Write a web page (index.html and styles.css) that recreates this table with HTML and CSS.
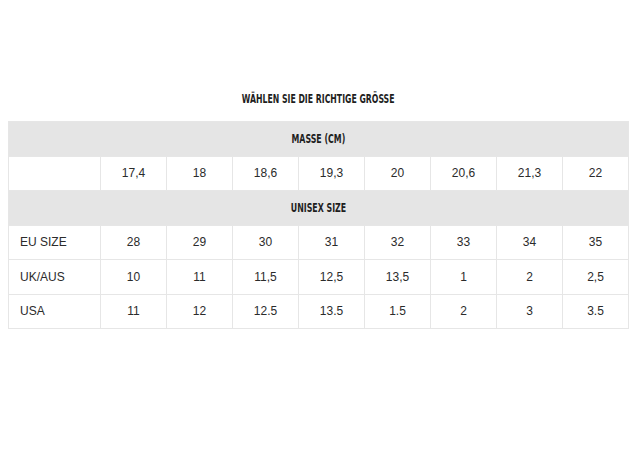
FILE: index.html
```html
<!DOCTYPE html>
<html lang="de">
<head>
<meta charset="utf-8">
<link rel="stylesheet" href="styles.css">
</head>
<body>
<div class="page">
  <h1 class="title"><span class="narrow">WÄHLEN SIE DIE RICHTIGE GRÖSSE</span></h1>
  <table class="sizes">
    <colgroup>
      <col class="c-first">
      <col><col><col><col><col><col><col><col>
    </colgroup>
    <tr class="head"><td colspan="9"><span class="narrow">MASSE (CM)</span></td></tr>
    <tr><td></td><td>17,4</td><td>18</td><td>18,6</td><td>19,3</td><td>20</td><td>20,6</td><td>21,3</td><td>22</td></tr>
    <tr class="head"><td colspan="9"><span class="narrow">UNISEX SIZE</span></td></tr>
    <tr><td class="label">EU SIZE</td><td>28</td><td>29</td><td>30</td><td>31</td><td>32</td><td>33</td><td>34</td><td>35</td></tr>
    <tr><td class="label">UK/AUS</td><td>10</td><td>11</td><td>11,5</td><td>12,5</td><td>13,5</td><td>1</td><td>2</td><td>2,5</td></tr>
    <tr><td class="label">USA</td><td>11</td><td>12</td><td>12.5</td><td>13.5</td><td>1.5</td><td>2</td><td>3</td><td>3.5</td></tr>
  </table>
</div>
</body>
</html>
```
FILE: styles.css
```css
html, body {
  margin: 0;
  padding: 0;
  background: #ffffff;
}
.page {
  padding: 92px 6px 0 8px;
  font-family: "Liberation Sans", Arial, sans-serif;
  color: #2b2b2b;
}
.title {
  margin: 0 0 15px 0;
  text-align: center;
  font-family: "DejaVu Sans Condensed", "DejaVu Sans", sans-serif;
  font-weight: bold;
  font-size: 12px;
  line-height: 14px;
  color: #1e1e1e;
}
.title .narrow {
  transform: scaleX(0.72);
}
.narrow {
  display: inline-block;
  transform: scaleX(0.76);
  transform-origin: center;
  white-space: nowrap;
}
.sizes {
  border-collapse: collapse;
  width: 621px;
  table-layout: fixed;
  font-size: 12px;
}
.c-first {
  width: 92px;
}
.sizes td {
  border: 1px solid #e6e6e6;
  height: 33.5px;
  padding: 0;
  text-align: center;
  vertical-align: middle;
}
.sizes td.label {
  text-align: left;
  padding-left: 11px;
}
.sizes tr.head td {
  background: #e5e5e5;
  font-family: "DejaVu Sans Condensed", "DejaVu Sans", sans-serif;
  font-weight: bold;
  font-size: 11.5px;
  color: #1e1e1e;
}
```
